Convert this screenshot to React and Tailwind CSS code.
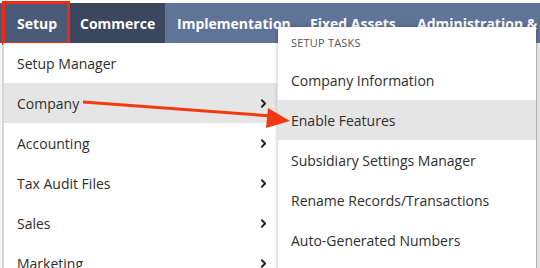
import { ChevronRight } from "lucide-react";

const leftItems = [
  { label: "Setup Manager", sub: false },
  { label: "Company", sub: true, active: true },
  { label: "Accounting", sub: true },
  { label: "Tax Audit Files", sub: true },
  { label: "Sales", sub: true },
  { label: "Marketing", sub: true },
];

const tasks = [
  { label: "Company Information" },
  { label: "Enable Features", active: true },
  { label: "Subsidiary Settings Manager" },
  { label: "Rename Records/Transactions" },
  { label: "Auto-Generated Numbers" },
];

export default function App() {
  return (
    <div
      className="relative w-[540px] h-[268px] overflow-hidden bg-white"
      style={{ fontFamily: "'Open Sans', 'Liberation Sans', sans-serif" }}
    >
      {/* top nav */}
      <div className="pt-[3px]">
        <div className="flex h-[40px] bg-[#607497] text-white text-[14px] font-bold whitespace-nowrap">
          <div className="flex shrink-0 items-center w-[68px] pl-[17px] bg-[#4b5a78]">Setup</div>
          <div className="flex shrink-0 items-center w-[97px] pl-[12px] bg-[#3b465f]">Commerce</div>
          <div className="flex shrink-0 items-center w-[133px] pl-[12px]">Implementation</div>
          <div className="flex shrink-0 items-center w-[107px] pl-[12px]">Fixed Assets</div>
          <div className="flex shrink-0 items-center pl-[12px]">Administration &amp; Customization</div>
        </div>
      </div>

      {/* page behind */}
      <div className="flex h-[225px]">
        <div className="w-[3px] bg-[#f4f4f4] border-r border-[#d6d6d6]" />
        <div className="flex-1" />
        <div className="w-[4px] bg-[#e9e9e9] border-l border-[#d0d0d0]" />
      </div>

      {/* red highlight box around Setup */}
      <div className="absolute left-[2px] top-[1px] w-[68px] h-[44px] border-[3px] border-[#f2290f]" />

      {/* Setup dropdown */}
      <div className="absolute left-[3px] top-[43px] w-[274px] bg-white border-l border-[#d6d6d6] text-[14px] text-[#2e2e2e]">
        {leftItems.map((it) => (
          <div
            key={it.label}
            className={`flex items-center justify-between h-[40px] pl-[13px] pr-[7px] ${it.active ? "bg-[#e5e5e5]" : ""}`}
          >
            <span>{it.label}</span>
            {it.sub && <ChevronRight size={13} strokeWidth={3.5} className="text-[#222]" />}
          </div>
        ))}
      </div>

      {/* Setup tasks flyout */}
      <div className="absolute left-[278px] top-[27px] w-[258px] h-[260px] bg-white shadow-[0_0_4px_rgba(0,0,0,0.3)] text-[#2e2e2e]">
        <div className="h-[33px] flex items-center pl-[13px] text-[11px] text-[#555] tracking-[0.2px]">
          SETUP TASKS
        </div>
        {tasks.map((t) => (
          <div
            key={t.label}
            className={`flex items-center h-[40px] pl-[13px] text-[14px] ${t.active ? "bg-[#e5e5e5]" : ""}`}
          >
            {t.label}
          </div>
        ))}
      </div>

      {/* red arrow */}
      <svg className="absolute left-0 top-0" width="540" height="268" viewBox="0 0 540 268">
        <line x1="83" y1="102" x2="272" y2="116" stroke="#f2390f" strokeWidth="3" />
        <polygon points="290,121 268,108 266,128" fill="#f2390f" />
      </svg>
    </div>
  );
}
